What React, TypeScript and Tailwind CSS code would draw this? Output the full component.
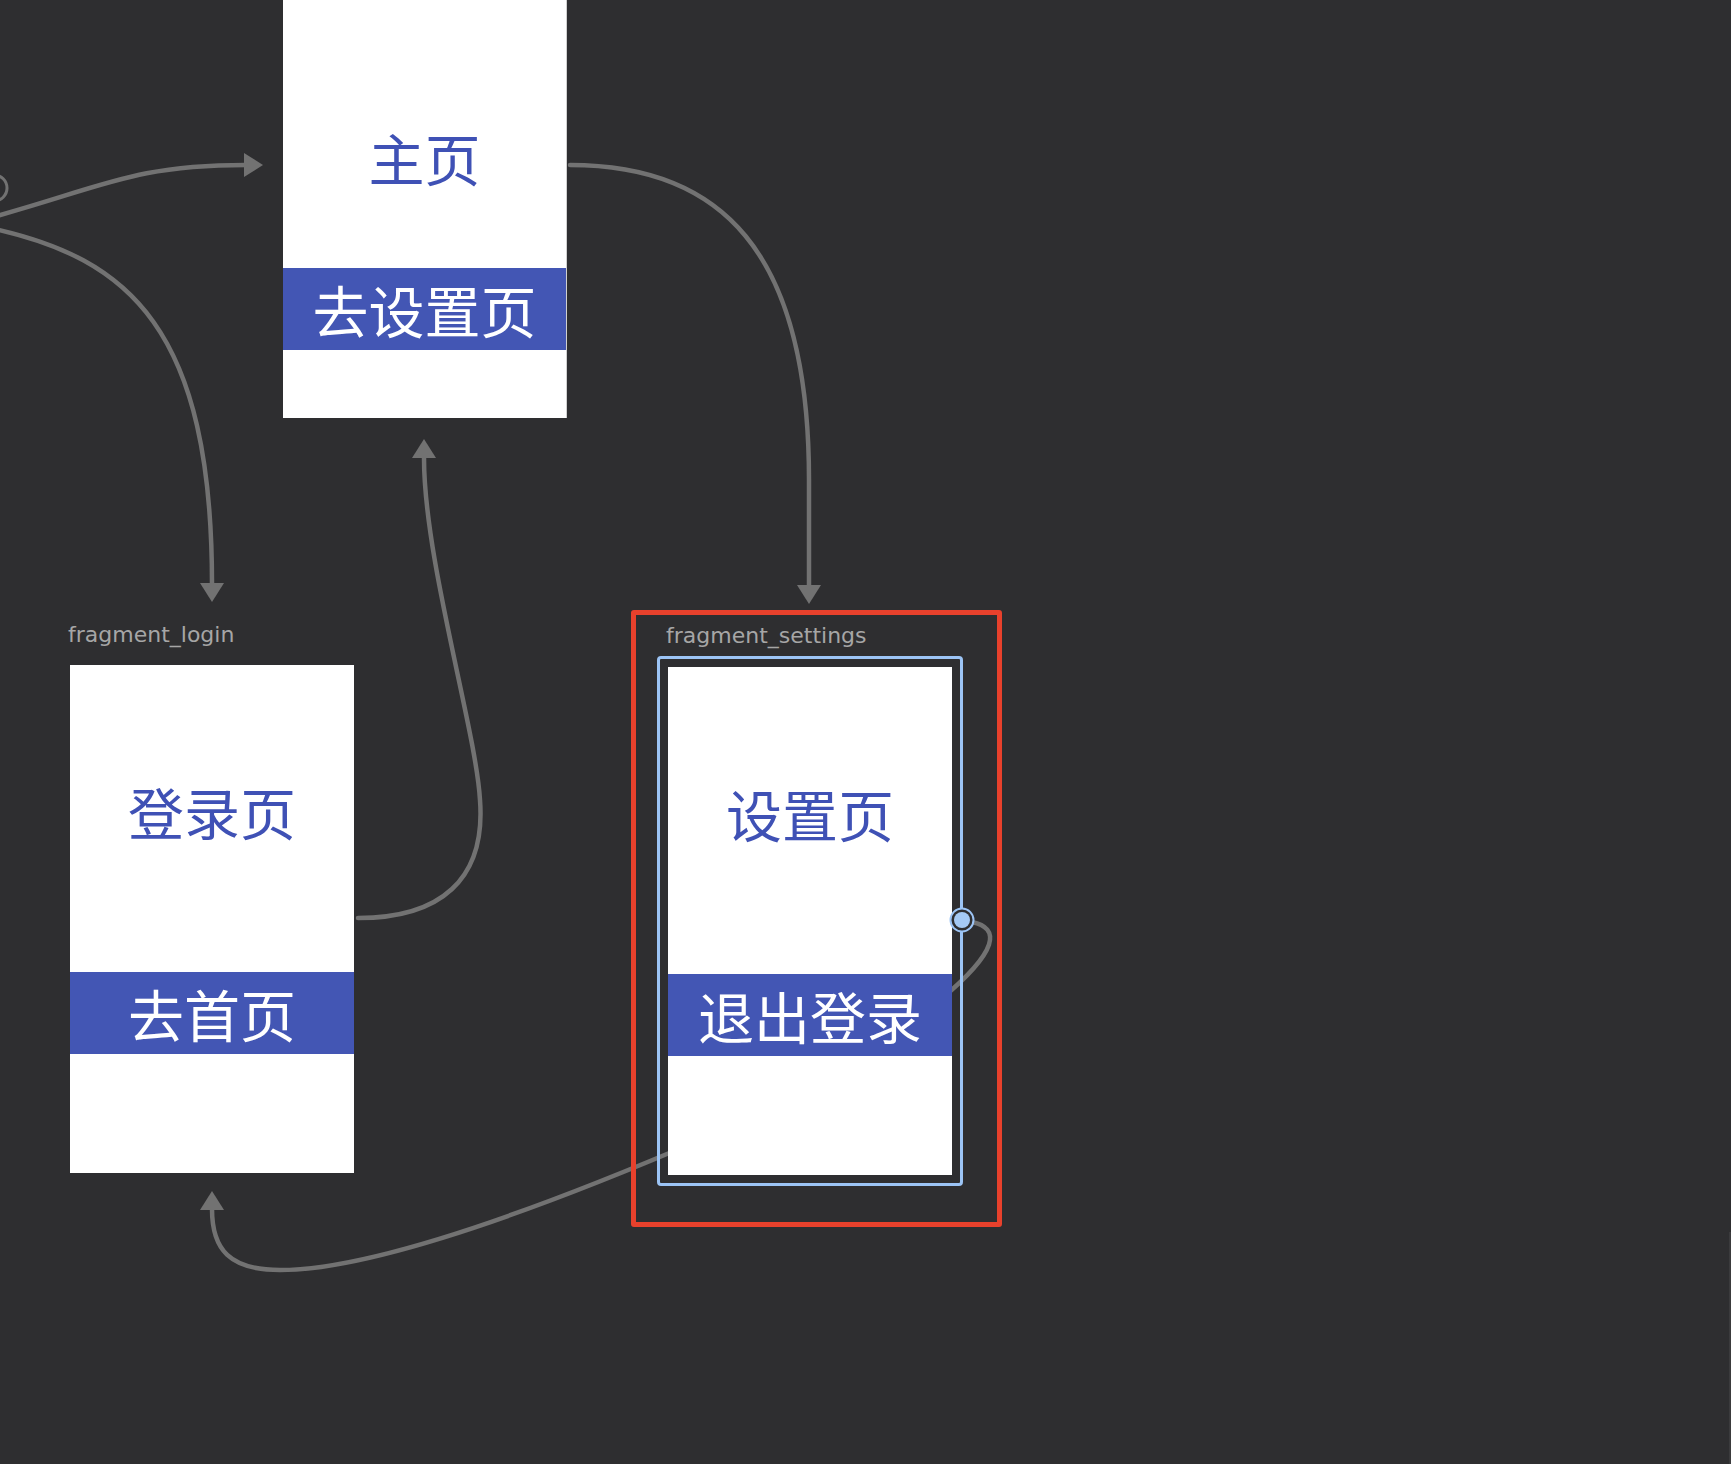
const CJK = "font-['Noto_Sans_CJK_SC','Noto_Sans',sans-serif]";
const LABEL = "font-['DejaVu_Sans',sans-serif] text-[22px] leading-[26px] text-[#a6a6a6]";
const EDGE = "#727272";

function Band({ text }: { text: string }) {
  return (
    <div className={`flex h-[82px] items-center justify-center bg-[#4356b4] text-[56px] leading-none text-white ${CJK}`}>
      {text}
    </div>
  );
}

function ScreenCard({ title, button }: { title: string; button: string }) {
  return (
    <div className="flex h-[508px] w-[284px] flex-col bg-white">
      <div className={`flex h-[307px] items-center justify-center pb-[15px] text-[56px] leading-none text-[#3f51b5] ${CJK}`}>
        {title}
      </div>
      <Band text={button} />
      <div className="flex-1" />
    </div>
  );
}

function Arrow({ d }: { d: string }) {
  return <path d={d} fill={EDGE} stroke="none" />;
}

export default function App() {
  return (
    <div className="relative h-[1464px] w-[1731px] overflow-hidden bg-[#2e2e30]">
      {/* edges */}
      <svg className="absolute inset-0" width="1731" height="1464" fill="none">
        <g stroke={EDGE} strokeWidth="4.5" strokeLinecap="round">
          <circle cx="-6" cy="188" r="13" strokeWidth="3" />
          <path d="M -40 226 C 100 190, 125 165, 246 165" />
          <path d="M -10 228 C 130 258, 212 330, 212 584" />
          <path d="M 570 165 C 720 165, 809 250, 809 480 L 809 586" />
          <path d="M 358 918 C 440 918, 486 880, 480 800 C 476 730, 424 560, 424 458" />
          <path d="M 700 1140 C 560 1200, 380 1270, 280 1270 C 230 1270, 212 1250, 212 1209" />
          <path d="M 972 922 C 1000 928, 1000 950, 940 1000" />
        </g>
        <Arrow d="M 263 165 L 244 153 L 244 177 Z" />
        <Arrow d="M 212 602 L 200 583 L 224 583 Z" />
        <Arrow d="M 809 604 L 797 585 L 821 585 Z" />
        <Arrow d="M 424 439 L 412 458 L 436 458 Z" />
        <Arrow d="M 212 1191 L 200 1210 L 224 1210 Z" />
      </svg>

      {/* fragment_main (top cut off) */}
      <div className="absolute left-[283px] top-0 flex h-[418px] w-[283px] flex-col bg-white shadow-[1px_0_0_#d0d0d0]">
        <div className={`flex h-[268px] items-center justify-center pt-[46px] text-[56px] leading-none text-[#3f51b5] ${CJK}`}>
          主页
        </div>
        <Band text="去设置页" />
        <div className="flex-1" />
      </div>

      {/* fragment_login */}
      <div className="absolute left-[68px] top-[622px] flex flex-col">
        <div className={LABEL}>fragment_login</div>
        <div className="ml-[2px] mt-[17px]">
          <ScreenCard title="登录页" button="去首页" />
        </div>
      </div>

      {/* fragment_settings, selected */}
      <div className="absolute left-[631px] top-[610px] h-[617px] w-[371px] rounded-[3px] border-[5px] border-[#e8412c] pl-[21px] pt-[8px]">
        <div className={`ml-[9px] ${LABEL}`}>fragment_settings</div>
        <div className="mt-[7px] w-[306px] rounded-[4px] border-[3px] border-[#9cc4f5] p-[8px]">
          <ScreenCard title="设置页" button="退出登录" />
        </div>
      </div>

      {/* action handle */}
      <svg className="absolute left-[949px] top-[907px]" width="26" height="26">
        <circle cx="13" cy="13" r="11.5" fill="#2e2e30" stroke="#9cc4f5" strokeWidth="2" />
        <circle cx="13" cy="13" r="8" fill="#a4c9f4" />
      </svg>

      <div className="absolute right-0 top-[1232px] h-[232px] w-[2px] bg-[#3b3b3d]" />
    </div>
  );
}
